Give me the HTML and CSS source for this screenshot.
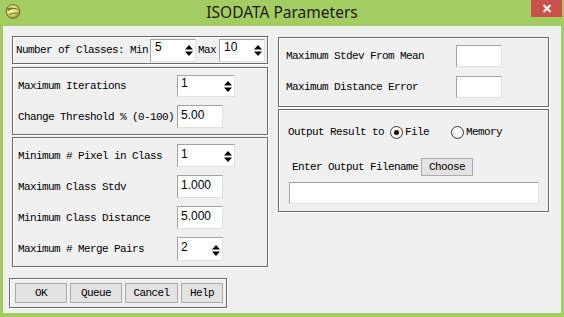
FILE: index.html
```html
<!DOCTYPE html>
<html lang="en">
<head>
    <meta charset="UTF-8">
    <title>ISODATA Parameters</title>
    <link rel="stylesheet" href="styles.css">
</head>
<body>
    <div class="window">
        <div class="titlebar">
            <svg class="app-icon" width="18" height="16" viewBox="0 0 18 16">
                <defs>
                    <radialGradient id="globe" cx="0.4" cy="0.35" r="0.7">
                        <stop offset="0" stop-color="#fbf8c8"/>
                        <stop offset="0.6" stop-color="#d9d46a"/>
                        <stop offset="1" stop-color="#8d8a2a"/>
                    </radialGradient>
                </defs>
                <circle cx="9" cy="8.5" r="6.8" fill="url(#globe)" stroke="#5f6a24" stroke-width="1"/>
                <path d="M3 6 C6 4, 11 4, 15 7 C12 6, 7 6, 4 8 Z" fill="#6e7d2c"/>
                <path d="M5 12 C8 10, 12 10, 14 11" stroke="#7a8a30" stroke-width="1.2" fill="none"/>
            </svg>
            <span class="title">ISODATA Parameters</span>
            <div class="close">
                <svg width="10" height="9" viewBox="0 0 10 9">
                    <path d="M1.5 1 L8.5 8 M8.5 1 L1.5 8" stroke="#fff" stroke-width="2"/>
                </svg>
            </div>
        </div>

        <div class="client">
            <div class="columns">
                <div class="col-left">
                    <div class="panel p-classes">
                        <span class="lbl">Number of Classes: Min</span>
                        <div class="field spin w46 top">5
                            <svg class="arrows" width="8" height="11" viewBox="0 0 8 11"><path d="M4 0 L8 4.5 L0 4.5 Z M0 6.5 L8 6.5 L4 11 Z" fill="#000"/></svg>
                        </div>
                        <span class="lbl max">Max</span>
                        <div class="field spin w46 top">10
                            <svg class="arrows" width="8" height="11" viewBox="0 0 8 11"><path d="M4 0 L8 4.5 L0 4.5 Z M0 6.5 L8 6.5 L4 11 Z" fill="#000"/></svg>
                        </div>
                    </div>

                    <div class="panel p-iter">
                        <span class="lbl">Maximum Iterations</span>
                        <div class="field spin w58 top">1
                            <svg class="arrows" width="8" height="11" viewBox="0 0 8 11"><path d="M4 0 L8 4.5 L0 4.5 Z M0 6.5 L8 6.5 L4 11 Z" fill="#000"/></svg>
                        </div>
                        <span class="lbl">Change Threshold % (0-100)</span>
                        <div class="field w46">5.00</div>
                    </div>

                    <div class="panel p-params">
                        <span class="lbl">Minimum # Pixel in Class</span>
                        <div class="field spin w58">1
                            <svg class="arrows" width="8" height="11" viewBox="0 0 8 11"><path d="M4 0 L8 4.5 L0 4.5 Z M0 6.5 L8 6.5 L4 11 Z" fill="#000"/></svg>
                        </div>
                        <span class="lbl">Maximum Class Stdv</span>
                        <div class="field w46">1.000</div>
                        <span class="lbl">Minimum Class Distance</span>
                        <div class="field w46">5.000</div>
                        <span class="lbl">Maximum # Merge Pairs</span>
                        <div class="field spin w46">2
                            <svg class="arrows" width="8" height="11" viewBox="0 0 8 11"><path d="M4 0 L8 4.5 L0 4.5 Z M0 6.5 L8 6.5 L4 11 Z" fill="#000"/></svg>
                        </div>
                    </div>
                </div>

                <div class="col-right">
                    <div class="panel p-stdev">
                        <span class="lbl">Maximum Stdev From Mean</span>
                        <div class="field w46"></div>
                        <span class="lbl">Maximum Distance Error</span>
                        <div class="field w46"></div>
                    </div>

                    <div class="panel p-output">
                        <div class="radio-row">
                            <span class="lbl">Output Result to</span>
                            <span class="radio checked"></span>
                            <span class="lbl radio-lbl">File</span>
                            <span class="radio memory"></span>
                            <span class="lbl radio-lbl">Memory</span>
                        </div>
                        <div class="file-row">
                            <span class="lbl">Enter Output Filename</span>
                            <button class="btn choose">Choose</button>
                        </div>
                        <div class="field filename"></div>
                    </div>
                </div>
            </div>

            <div class="panel p-buttons">
                <button class="btn w52">OK</button>
                <button class="btn w52">Queue</button>
                <button class="btn w53">Cancel</button>
                <button class="btn w42">Help</button>
            </div>
        </div>
    </div>
</body>
</html>
```

FILE: styles.css
```css
body {
    margin: 0;
    font-family: "Liberation Mono", "DejaVu Sans Mono", monospace;
    font-size: 11px;
    letter-spacing: -0.6px;
    color: #000;
}
.window {
    width: 564px;
    height: 317px;
    box-sizing: border-box;
    padding: 0 3px 4px;
    background-color: #a3cc61;
    display: flex;
    flex-direction: column;
}
.titlebar {
    height: 26px;
    display: grid;
    grid-template-columns: 1fr auto 1fr;
    align-items: start;
}
.app-icon {
    margin: 3px 0 0 1px;
}
.title {
    font-family: "Noto Sans", "Open Sans", sans-serif;
    font-size: 15.5px;
    letter-spacing: 0;
    line-height: 25px;
    color: #1b1b1b;
}
.close {
    justify-self: end;
    width: 31px;
    height: 17px;
    margin-right: -1px;
    background-color: #c9514b;
    display: flex;
    align-items: center;
    justify-content: center;
}
.client {
    flex: 1;
    background-color: #f0f0f0;
    padding: 10px 0 0 6px;
}
.columns {
    display: flex;
    gap: 10px;
    margin-left: 3px;
}
.col-left {
    width: 256px;
}
.col-right {
    width: 271px;
    padding-top: 1px;
}
.panel {
    box-sizing: border-box;
    border: 1px solid #6a6a6a;
    box-shadow: inset 1px 1px 0 #fff, 1px 1px 0 #fff;
}
.lbl {
    white-space: pre;
}

/* input boxes */
.field {
    box-sizing: border-box;
    background-color: #fff;
    border: 1px solid;
    border-color: #a3a3a3 #e0e0e0 #e0e0e0 #a3a3a3;
    font-family: "Liberation Sans", Arial, sans-serif;
    font-size: 12px;
    letter-spacing: 0;
    line-height: 14px;
    padding: 2px 3px 0;
    display: flex;
    justify-content: space-between;
    align-items: flex-start;
}
.field.top {
    padding-top: 0;
}
.field .arrows {
    align-self: center;
    margin-right: -1px;
}
.w46 { width: 46px; }
.w58 { width: 58px; }

.p-classes {
    height: 28px;
    padding: 2px 0 0 3px;
    display: flex;
    align-items: flex-start;
}
.p-classes .lbl {
    line-height: 23px;
    width: 132px;
    margin-right: 2px;
}
.p-classes .lbl.max {
    width: 18px;
    margin: 0 3px 0 2px;
}
.p-classes .field {
    height: 23px;
    padding-left: 4px;
}

.p-iter {
    margin-top: 3px;
    height: 68px;
    padding: 7px 0 0 5px;
    display: grid;
    grid-template-columns: 159px auto;
    grid-template-rows: 22px 23px;
    row-gap: 8px;
    align-items: center;
    justify-items: start;
}
.p-iter .field,
.p-params .field,
.p-stdev .field {
    height: 100%;
}

.p-params {
    margin-top: 2px;
    height: 130px;
    padding: 6px 0 0 5px;
    display: grid;
    grid-template-columns: 159px auto;
    grid-template-rows: 23px 23px 23px 24px;
    row-gap: 8px;
    align-items: center;
    justify-items: start;
}

.p-stdev {
    height: 70px;
    padding: 7px 0 0 7px;
    display: grid;
    grid-template-columns: 170px auto;
    grid-template-rows: 22px 22px;
    row-gap: 9px;
    align-items: center;
    justify-items: start;
}

.p-output {
    margin-top: 2px;
    height: 103px;
    padding: 14px 0 0 9px;
}
.radio-row {
    display: flex;
    align-items: center;
    height: 16px;
}
.radio {
    box-sizing: border-box;
    width: 13px;
    height: 13px;
    border-radius: 50%;
    border: 1px solid #3c3c3c;
    background: radial-gradient(circle at 40% 35%, #fff 0%, #f4f4f4 55%, #d6d6d6 100%);
    margin-left: 6px;
    margin-right: 2px;
    display: flex;
    align-items: center;
    justify-content: center;
}
.radio.checked::after {
    content: "";
    width: 5px;
    height: 5px;
    border-radius: 50%;
    background-color: #111;
}
.radio.memory {
    margin-left: 22px;
}
.file-row {
    display: flex;
    align-items: center;
    height: 18px;
    margin: 18px 0 0 4px;
}
.filename {
    width: 250px;
    height: 22px;
    margin: 6px 0 0 1px;
}

/* buttons */
.btn {
    box-sizing: border-box;
    height: 20px;
    padding: 0;
    background-color: #e3e3e3;
    border: 1px solid #acacac;
    font-family: inherit;
    font-size: 11px;
    letter-spacing: -0.6px;
    color: #000;
}
.choose {
    width: 52px;
    height: 18px;
    margin-left: 3px;
}
.p-buttons {
    margin-top: 11px;
    width: 218px;
    height: 30px;
    padding: 4px 0 0 5px;
    display: flex;
    gap: 3px;
    align-items: flex-start;
}
.w52 { width: 52px; }
.w53 { width: 53px; }
.w42 { width: 42px; }
```
